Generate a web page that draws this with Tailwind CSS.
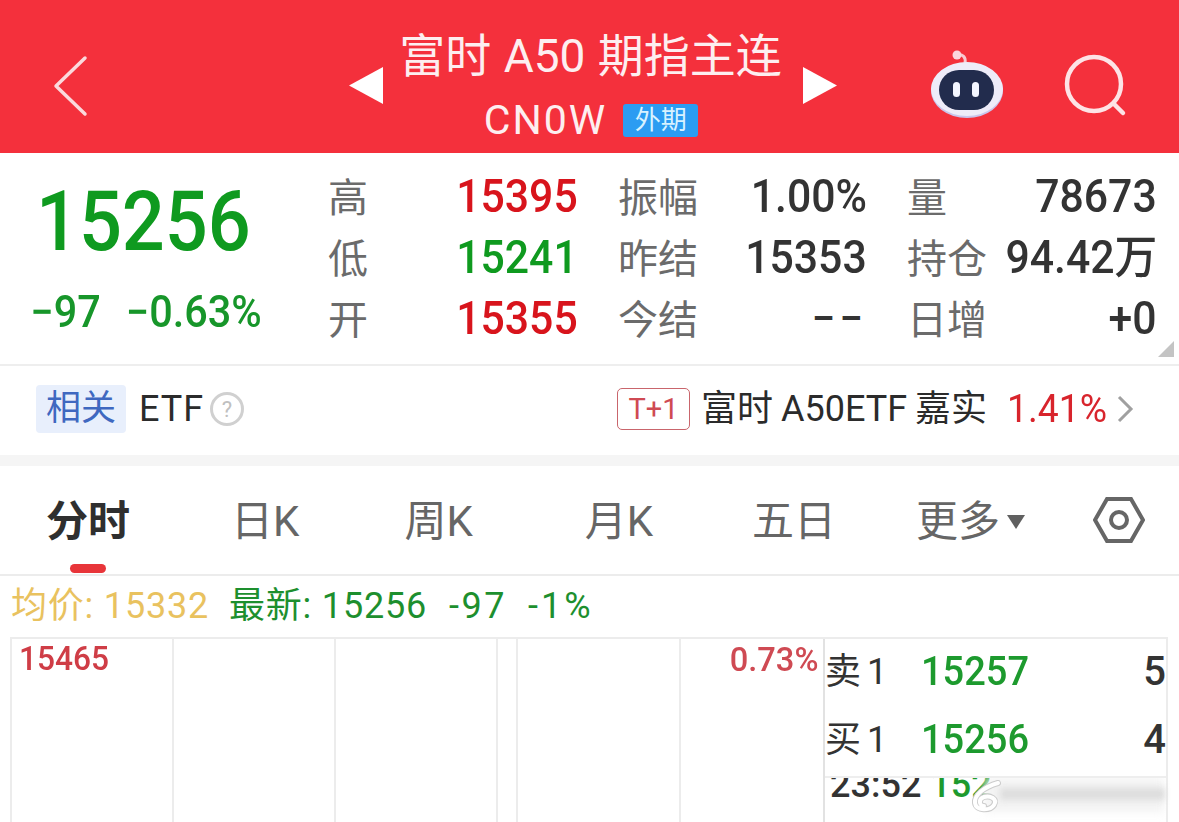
<!doctype html>
<html lang="zh"><head><meta charset="utf-8">
<script src="https://cdn.jsdelivr.net/npm/@tailwindcss/browser@4"></script></head>
<body class="bg-white">
<div class="w-[1179px] h-[822px] overflow-hidden bg-white font-['Roboto','Noto_Sans_CJK_SC',sans-serif] relative">
  <header class="h-[153px] bg-[#f4303c] flex items-start text-[#fdeef0] relative">
    <svg class="absolute left-[52px] top-[54px]" width="38" height="64" viewBox="0 0 38 64" fill="none" stroke="#fbd9dc" stroke-width="3.5" stroke-linecap="round" stroke-linejoin="round"><path d="M33 4 L4 32 L33 60"/></svg>
    <svg class="absolute left-[348px] top-[67px]" width="36" height="37" viewBox="0 0 36 37" fill="#fff"><path d="M1 18.5 L35 0 V37 Z"/></svg>
    <svg class="absolute left-[803px] top-[67px]" width="34" height="37" viewBox="0 0 34 37" fill="#fff"><path d="M0 0 L34 18.5 L0 37 Z"/></svg>
    <div class="w-full flex flex-col items-center pt-[28px]">
      <div class="text-[46px] leading-[56px] ml-[2px] whitespace-nowrap [word-spacing:1px]">富时 A50 期指主连</div>
      <div class="flex items-center gap-[16px] mt-[13px] ml-[3px]">
        <span class="text-[41px] leading-[46px] tracking-[2px]">CN0W</span>
        <span class="w-[75px] h-[33px] rounded-[3px] bg-[#2b9cf2] text-[#d8f2ff] text-[26px] leading-[33px] text-center">外期</span>
      </div>
    </div>
    <svg class="absolute left-[928px] top-[50px]" width="78" height="72" viewBox="0 0 78 72">
      <path d="M29 5 C35 4 38 7 37 13" fill="none" stroke="#f8c8d0" stroke-width="3"/>
      <circle cx="29" cy="5" r="4.5" fill="#fbd5dc"/>
      <ellipse cx="39" cy="40.5" rx="36" ry="27.5" fill="#c9c5ec"/>
      <ellipse cx="39" cy="39" rx="36" ry="27" fill="#eeecf9"/>
      <rect x="11" y="20" width="55" height="40" rx="20" fill="#222c4d"/>
      <rect x="25" y="32" width="7" height="15" rx="3.5" fill="#f4f6ff"/>
      <rect x="44" y="32" width="7" height="15" rx="3.5" fill="#f4f6ff"/>
    </svg>
    <svg class="absolute left-[1062px] top-[54px]" width="66" height="64" viewBox="0 0 66 64" fill="none" stroke="#fde3e6" stroke-width="4.5" stroke-linecap="round"><circle cx="32" cy="30" r="27"/><path d="M52 50 L61 59"/></svg>
  </header>

  <section class="h-[213px] border-b-2 border-[#eeeeee] relative flex">
    <div class="w-[294px] flex flex-col items-center">
      <div class="text-[#0f9a1f] text-[84px] leading-[96px] font-medium mt-[21px] ml-[-8px] scale-x-90">15256</div>
      <div class="text-[#17962a] text-[44px] leading-[44px] mt-[20px] flex gap-[27px] ml-[-1px] font-medium scale-x-[.94] whitespace-nowrap"><span>−97</span><span>−0.63%</span></div>
    </div>
    <div class="grid grid-cols-[250px_249px_250px] gap-x-[40px] auto-rows-[61px] ml-[34px] mt-[13px] text-[40px] leading-[61px] whitespace-nowrap text-[#6b6b6b]">
      <div class="flex justify-between"><span class="mt-[2px]">高</span><span class="origin-right scale-x-[.93] text-[46px] font-medium text-[#d8141c]">15395</span></div>
      <div class="flex justify-between"><span class="mt-[2px]">振幅</span><span class="origin-right scale-x-[.93] text-[46px] font-medium text-[#333333]">1.00%</span></div>
      <div class="flex justify-between"><span class="mt-[2px]">量</span><span class="origin-right scale-x-[.93] text-[46px] font-medium text-[#333333]">78673</span></div>
      <div class="flex justify-between"><span class="mt-[2px]">低</span><span class="origin-right scale-x-[.93] text-[46px] font-medium text-[#0f9a1f]">15241</span></div>
      <div class="flex justify-between"><span class="mt-[2px]">昨结</span><span class="origin-right scale-x-[.93] text-[46px] font-medium text-[#333333]">15353</span></div>
      <div class="flex justify-between"><span class="mt-[2px]">持仓</span><span class="origin-right scale-x-[.93] text-[46px] font-medium text-[#333333]">94.42万</span></div>
      <div class="flex justify-between"><span class="mt-[2px]">开</span><span class="origin-right scale-x-[.93] text-[46px] font-medium text-[#d8141c]">15355</span></div>
      <div class="flex justify-between"><span class="mt-[2px]">今结</span><span class="origin-right text-[42px] font-medium text-[#333333] tracking-[4px]">−−</span></div>
      <div class="flex justify-between"><span class="mt-[2px]">日增</span><span class="origin-right scale-x-[.93] text-[46px] font-medium text-[#333333]">+0</span></div>
    </div>
    <svg class="absolute right-[5px] bottom-[7px]" width="16" height="16" viewBox="0 0 16 16" fill="#c4c4c4"><path d="M16 0 V16 H0 Z"/></svg>
  </section>

  <section class="h-[89px] flex items-center pb-[3px]">
    <span class="ml-[36px] w-[90px] h-[48px] bg-[#e8effc] rounded-[4px] text-[#3f68c0] text-[35px] leading-[48px] text-center">相关</span>
    <span class="ml-[13px] text-[36px] text-[#2b2b2b] tracking-[1px]">ETF</span>
    <svg class="ml-[5px]" width="36" height="36" viewBox="0 0 36 36"><circle cx="18" cy="18" r="15.5" fill="none" stroke="#d0d0d0" stroke-width="3"/><text x="18" y="26" text-anchor="middle" font-size="22" fill="#c0c0c0" font-family="Roboto">?</text></svg>
    <span class="ml-auto w-[73px] h-[42px] border border-[#c9656c] rounded-[5px] text-[#cf4a53] text-[29px] leading-[40px] text-center">T+1</span>
    <span class="ml-[11px] text-[36px] leading-[50px] text-[#2b2b2b] whitespace-nowrap [word-spacing:-1px]">富时 A50ETF 嘉实</span>
    <span class="ml-[19px] text-[38px] leading-[50px] text-[#d8242c] scale-x-[.98]">1.41%</span>
    <svg class="ml-[8px] mr-[45px]" width="18" height="28" viewBox="0 0 18 28" fill="none" stroke="#a0a0a0" stroke-width="3"><path d="M3 2 L15 14 L3 26"/></svg>
  </section>
  <div class="h-[11px] bg-[#f5f5f5]"></div>

  <nav class="h-[110px] border-b-2 border-[#ececec] relative flex text-[42px] text-[#666666] leading-[112px] whitespace-nowrap">
    <span class="ml-[46px] font-bold text-[#2f2f2f]">分时</span>
    <span class="ml-[101px]">日K</span>
    <span class="ml-[105px]">周K</span>
    <span class="ml-[112px]">月K</span>
    <span class="ml-[99px]">五日</span>
    <span class="ml-[80px]">更多</span>
    <svg class="ml-[6px] mt-[49px]" width="20" height="14" viewBox="0 0 20 14" fill="#606060"><path d="M1 0 H19 L10 14 Z"/></svg>
    <svg class="absolute left-[1093px] top-[31px]" width="52" height="46" viewBox="0 0 52 46" fill="none" stroke="#666" stroke-width="4"><path d="M14 2 H38 L50 23 L38 44 H14 L2 23 Z"/><circle cx="26" cy="23" r="8"/></svg>
    <span class="absolute left-[70px] bottom-[1px] w-[36px] h-[9px] rounded-[5px] bg-[#e8353a]"></span>
  </nav>

  <div class="h-[61px] flex text-[36px] leading-[61px] pl-[11px] whitespace-nowrap tracking-[0.8px]">
    <span class="text-[#e9c25f]">均价: 15332</span>
    <span class="ml-[20px] text-[#1d8f2e]">最新: 15256</span>
    <span class="ml-[22px] text-[#1d8f2e] tracking-[2.5px]">-97</span>
    <span class="ml-[21px] text-[#1d8f2e] tracking-[3px]">-1%</span>
  </div>

  <div class="flex h-[185px] ml-[10px] mr-[11px] border-t-2 border-l-2 border-r-2 border-[#ececec]">
    <div class="w-[813px] shrink-0 relative border-r-2 border-[#e2e2e2]">
      <div class="absolute inset-0 flex">
        <i class="block w-[162px] border-r-2 border-[#ececec]"></i>
        <i class="block w-[162px] border-r-2 border-[#ececec]"></i>
        <i class="block w-[162px] border-r-2 border-[#ececec]"></i>
        <i class="block w-[20px] border-r-2 border-[#ececec]"></i>
        <i class="block w-[163px] border-r-2 border-[#ececec]"></i>
      </div>
      <span class="absolute left-[7px] top-0 text-[33px] leading-[40px] text-[#cf3d46] font-medium scale-x-[.96] origin-left">15465</span>
      <span class="absolute right-[5px] top-0 text-[34px] leading-[40px] text-[#cf4a53] font-medium scale-x-[.96] origin-right">0.73%</span>
    </div>
    <div class="flex-1 min-w-0 flex flex-col overflow-hidden">
      <div class="h-[65px] flex items-center text-[36px] text-[#333333]"><span>卖</span><span class="ml-[6px]">1</span><span class="ml-[34px] text-[40px] text-[#1d9a2e] font-medium scale-x-[.95] origin-left">15257</span><span class="ml-auto font-medium text-[40px]">5</span></div>
      <div class="h-[72px] flex items-center text-[36px] text-[#333333]"><span>买</span><span class="ml-[6px]">1</span><span class="ml-[34px] text-[40px] text-[#1d9a2e] font-medium scale-x-[.95] origin-left">15256</span><span class="ml-auto font-medium text-[40px]">4</span></div>
      <div class="h-[46px] overflow-hidden border-t-2 border-[#eeeeee] relative">
        <div class="text-[36px] leading-[36px] mt-[-11px] ml-[5px] text-[#333333] font-medium whitespace-nowrap">23:52 <span class="text-[#1d9a2e]">152</span></div>
        <div class="absolute left-[160px] right-[2px] top-0 h-[34px] bg-[#f3f3f3] blur-[4px]"></div>
      </div>
    </div>
  </div>
  <svg class="absolute left-[970px] top-[778px]" width="36" height="38" viewBox="0 0 36 38" fill="none" stroke-linecap="round">
    <path d="M28 5 C14 9 4 17 5 25 C6 33 20 33 24 27 C28 21 20 17 14 19 C8 21 9 28 14 28" stroke="#cccccc" stroke-width="6"/>
    <path d="M28 5 C14 9 4 17 5 25 C6 33 20 33 24 27 C28 21 20 17 14 19 C8 21 9 28 14 28" stroke="#ffffff" stroke-width="4"/>
  </svg>
  <div class="absolute left-[1000px] top-[788px] w-[165px] h-[12px] bg-[#dddddd] blur-[3px]"></div>
</div>
</body></html>
